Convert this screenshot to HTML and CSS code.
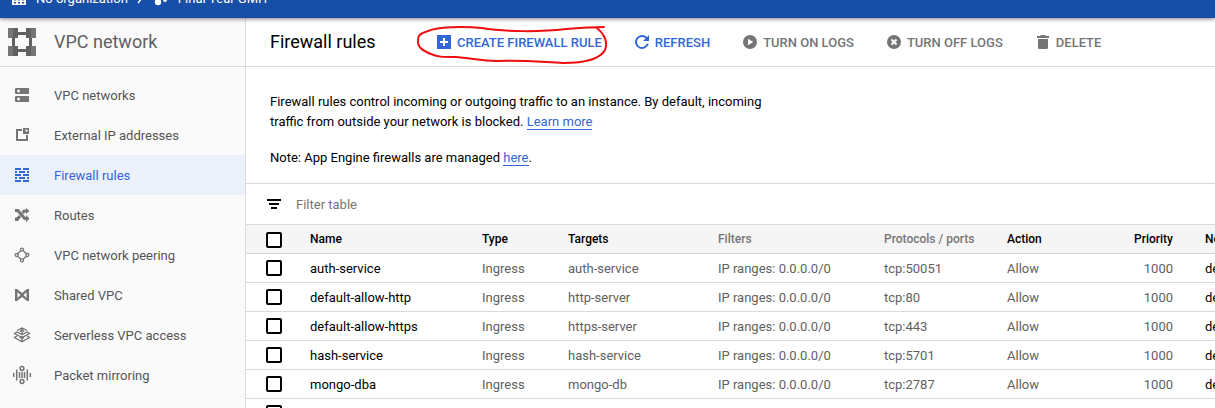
FILE: index.html
```html
<!DOCTYPE html>
<html lang="en">
<head>
<meta charset="utf-8">
<title>Firewall rules</title>
<link rel="stylesheet" href="styles.css">
</head>
<body>
<div class="app">
  <header class="topbar">
    <svg class="icon" viewBox="0 0 18 18"><path fill-rule="evenodd" d="M2 4h5V2h4v3h5v11H2zM4 7v1h2V7zm4 0v1h2V7zm4 0v1h2V7zM4 10v1.500h2V10zm4 0v1.500h2V10zm4 0v1.500h2V10zM4 13v1.500h2V13zm4 0v1.500h2V13zm4 0v1.500h2V13z"/></svg>
    <span class="crumb">No organization</span>
    <svg class="chevron" viewBox="0 0 8 12"><path d="M2 1l4 5-4 5" fill="none" stroke="currentColor" stroke-width="1.500"/></svg>
    <svg class="icon" viewBox="0 0 18 18"><circle cx="6" cy="13" r="3.200"/><circle cx="13" cy="11" r="2"/><circle cx="7" cy="5" r="2"/></svg>
    <span class="crumb">Final Year GMIT</span>
  </header>
  <div class="layout">
    <aside class="sidebar">
      <div class="product">
        <svg class="product-icon" viewBox="0 0 28 28"><path fill="#616161" d="M8 4h12v3H8zM8 21h12v3H8zM4 8h3v12H4zM21 8h3v12h-3z"/><path fill="#757575" d="M0 0h10v10H0zM18 0h10v10H18zM0 18h10v10H0zM18 18h10v10H18z"/><path fill="#616161" d="M5 0h5v10H5zM18 0h5v10h-5zM5 18h5v10H5zM18 18h5v10h-5z"/></svg>
        <span class="heading">VPC network</span>
      </div>
      <nav class="nav">
        <a class="nav-item" href="#"><svg class="icon" viewBox="0 0 18 18"><path fill-rule="evenodd" d="M3 2h13v6H3a1 1 0 0 1-1-1V3a1 1 0 0 1 1-1zM5.500 3.500a1.500 1.500 0 1 0 0 3 1.500 1.500 0 0 0 0-3zM3 10h13v6H3a1 1 0 0 1-1-1v-4a1 1 0 0 1 1-1zM5.500 11.500a1.500 1.500 0 1 0 0 3 1.500 1.500 0 0 0 0-3z"/></svg><span class="label">VPC networks</span></a>
        <a class="nav-item" href="#"><svg class="icon" viewBox="0 0 18 18"><path fill-rule="evenodd" d="M3 3h6v2H5v8h8V9h2v6H3zM10 2h6v6h-6zM12.500 3.500v2h2v-2z"/></svg><span class="label">External IP addresses</span></a>
        <a class="nav-item active" href="#" aria-current="page"><svg class="icon" viewBox="0 0 18 18"><path d="M2 2h6v2H2zM10 2h6v2h-6zM2 5h2v2H2zM6 5h6v2H6zM14 5h2v2h-2zM2 8h6v2H2zM10 8h6v2h-6zM2 11h2v2H2zM6 11h6v2H6zM14 11h2v2h-2zM2 14h6v2H2zM10 14h6v2h-6z"/></svg><span class="label">Firewall rules</span></a>
        <a class="nav-item" href="#"><svg class="icon" viewBox="0 0 18 18"><path d="M2 3h3.500l7 8h.500V9l3.500 3.500L13 16v-2h-2L4 6H2zM13 2l3.500 3L13 8V6.500h-1L10.500 8 8.500 6l2-2.500H13zM2 11.500h1.500L6 9l2 2-3 4H2z"/></svg><span class="label">Routes</span></a>
        <a class="nav-item" href="#"><svg class="icon" viewBox="0 0 18 18"><g fill="none" stroke="currentColor" stroke-width="1.300"><circle cx="9" cy="3.600" r="1.500"/><circle cx="9" cy="14.400" r="1.500"/><circle cx="3.600" cy="9" r="1.500"/><circle cx="14.400" cy="9" r="1.500"/><path d="M7.700 4.800L4.800 7.700M10.300 4.800l2.900 2.900M4.800 10.300l2.900 2.900M13.200 10.300l-2.900 2.900"/></g></svg><span class="label">VPC network peering</span></a>
        <a class="nav-item" href="#"><svg class="icon" viewBox="0 0 18 18"><path fill-rule="evenodd" d="M2 3h2l5 4 5-4h2v12h-2l-5-4-5 4H2zM4.500 6v6L7.500 9zM13.500 6v6l-3-3z"/></svg><span class="label">Shared VPC</span></a>
        <a class="nav-item" href="#"><svg class="icon" viewBox="0 0 18 18"><g fill="none" stroke="currentColor" stroke-width="1.300"><path d="M4 4.500L9 2l5 2.500M1.500 7.500L4 6l5 2.500L14 6l2.500 1.500L9 11.500zM9 4v4.500M4 10l-2.500 1.500L9 15.800l7.500-4.300L14 10M9 10.500v5M7 5.500l2-2 2 2M7 12.500l2-2 2 2"/></g></svg><span class="label">Serverless VPC access</span></a>
        <a class="nav-item" href="#"><svg class="icon" viewBox="0 0 18 18"><g fill="none" stroke="currentColor" stroke-width="1.500"><circle cx="9" cy="2.500" r="1.900"/><circle cx="9" cy="15.500" r="1.900"/><path d="M.7 7v4M3.700 3.500v11M6.500 6v6M9 6v6M11.500 6v6M14.300 3.500v11M17.300 7v4"/></g></svg><span class="label">Packet mirroring</span></a>
      </nav>
    </aside>
    <main class="main">
      <div class="toolbar">
        <h1 class="heading title">Firewall rules</h1>
        <div class="actions">
          <button class="action primary" type="button"><svg class="icon" viewBox="0 0 18 18"><path fill-rule="evenodd" d="M2 2h14v14H2zM8 5v3H5v2h3v3h2v-3h3V8h-3V5z"/></svg><span class="label">CREATE FIREWALL RULE</span></button>
          <button class="action primary" type="button"><svg class="icon" viewBox="0 0 18 18"><path d="M13.950 4.050A7 7 0 1 0 15.770 10.750H13.700A5 5 0 1 1 12.530 5.470L10 8h6V2z"/></svg><span class="label">REFRESH</span></button>
          <button class="action" type="button"><svg class="icon" viewBox="0 0 18 18"><path fill-rule="evenodd" d="M9 2a7 7 0 1 0 0 14A7 7 0 0 0 9 2zM7 5.800v6.400L12.200 9z"/></svg><span class="label">TURN ON LOGS</span></button>
          <button class="action" type="button"><svg class="icon" viewBox="0 0 18 18"><circle cx="9" cy="9" r="7"/><path d="M6.500 6.500l5 5M11.500 6.500l-5 5" stroke="#fff" stroke-width="2"/></svg><span class="label">TURN OFF LOGS</span></button>
          <button class="action" type="button"><svg class="icon" viewBox="0 0 18 18"><path d="M3 3h3l1-1h4l1 1h3v2H3zM4 6h10v8.500a1.500 1.500 0 0 1-1.500 1.500h-7A1.500 1.500 0 0 1 4 14.500z"/></svg><span class="label">DELETE</span></button>
        </div>
        <svg class="marker" viewBox="0 0 192 40"><path d="M188 3C172 3 162 4 150 5C125 8 90 8 66 4C45 2 22 3 12 7C3 10 2 11 2 18C2 24 8 27 15 30C22 33 26 33 39 33C55 34 65 37 80 37C110 36 125 38 147 39C168 39 184 35 189 26C192 18 188 10 181 4" fill="none" stroke="#f00d12" stroke-width="2" stroke-linecap="round"/></svg>
      </div>
      <section class="intro">
        <p>Firewall rules control incoming or outgoing traffic to an instance. By default, incoming traffic from outside your network is blocked. <a class="link" href="#">Learn more</a></p>
        <p>Note: App Engine firewalls are managed <a class="link" href="#">here</a>.</p>
      </section>
      <div class="filter">
        <svg class="icon" viewBox="0 0 18 18"><path d="M2 4h14v2H2zM4 8h10v2H4zM6 12h6v2H6z"/></svg>
        <input class="filter-input" type="text" placeholder="Filter table" aria-label="Filter table">
      </div>
      <div class="table-wrap">
        <table class="rules">
          <colgroup><col class="c-check"><col class="c-name"><col class="c-type"><col class="c-targets"><col class="c-filters"><col class="c-ports"><col class="c-action"><col class="c-priority"><col></colgroup>
          <thead>
            <tr><th class="select"><input class="check" type="checkbox" aria-label="Select all rules"></th><th>Name</th><th>Type</th><th>Targets</th><th class="muted">Filters</th><th class="muted">Protocols / ports</th><th>Action</th><th class="num">Priority</th><th class="net">Network</th></tr>
          </thead>
          <tbody>
            <tr><td class="select"><input class="check" type="checkbox" aria-label="Select auth-service"></td><td class="strong">auth-service</td><td>Ingress</td><td>auth-service</td><td>IP ranges: 0.0.0.0/0</td><td>tcp:50051</td><td>Allow</td><td class="num">1000</td><td class="net">default</td></tr>
            <tr><td class="select"><input class="check" type="checkbox" aria-label="Select default-allow-http"></td><td class="strong">default-allow-http</td><td>Ingress</td><td>http-server</td><td>IP ranges: 0.0.0.0/0</td><td>tcp:80</td><td>Allow</td><td class="num">1000</td><td class="net">default</td></tr>
            <tr><td class="select"><input class="check" type="checkbox" aria-label="Select default-allow-https"></td><td class="strong">default-allow-https</td><td>Ingress</td><td>https-server</td><td>IP ranges: 0.0.0.0/0</td><td>tcp:443</td><td>Allow</td><td class="num">1000</td><td class="net">default</td></tr>
            <tr><td class="select"><input class="check" type="checkbox" aria-label="Select hash-service"></td><td class="strong">hash-service</td><td>Ingress</td><td>hash-service</td><td>IP ranges: 0.0.0.0/0</td><td>tcp:5701</td><td>Allow</td><td class="num">1000</td><td class="net">default</td></tr>
            <tr><td class="select"><input class="check" type="checkbox" aria-label="Select mongo-dba"></td><td class="strong">mongo-dba</td><td>Ingress</td><td>mongo-db</td><td>IP ranges: 0.0.0.0/0</td><td>tcp:2787</td><td>Allow</td><td class="num">1000</td><td class="net">default</td></tr>
            <tr><td class="select"><input class="check" type="checkbox" aria-label="Select rule"></td><td></td><td></td><td></td><td></td><td></td><td></td><td></td><td></td></tr>
          </tbody>
        </table>
      </div>
    </main>
  </div>
</div>
</body>
</html>
```

FILE: styles.css
```css
* { box-sizing: border-box; }

body {
  margin: 0;
  font: 13px/20px Roboto, "Liberation Sans", sans-serif;
  color: #000;
  background: #fff;
}

.app {
  display: flex;
  flex-direction: column;
  height: 100vh;
  overflow: hidden;
}

.icon {
  flex: none;
  width: 18px;
  height: 18px;
  fill: currentColor;
}

/* Optical centring of text beside an icon */
.label,
.crumb { padding-top: 2px; }

/* The bar is scrolled partly out of view */
.topbar {
  position: relative;
  z-index: 1;
  flex: none;
  display: flex;
  align-items: center;
  gap: 8px;
  height: 40px;
  margin-top: -22px;
  padding: 0 10px;
  color: #fff;
  background: #174fa8;
  box-shadow: 0 1px 4px rgba(0, 0, 0, 0.5);
}

.chevron {
  width: 8px;
  height: 12px;
}

.layout {
  flex: 1;
  display: flex;
  min-height: 0;
}

.sidebar {
  flex: none;
  width: 246px;
  background: #fafafa;
  border-right: 1px solid #dadada;
}

.product,
.toolbar {
  display: flex;
  align-items: center;
  height: 49px;
  border-bottom: 1px solid #dadada;
}

.product {
  gap: 18px;
  padding-left: 8px;
  color: #616161;
}

.product-icon {
  width: 28px;
  height: 28px;
}

.heading {
  margin: 0;
  font-size: 18px;
  font-weight: 400;
  line-height: 24px;
}

.nav { padding-top: 8px; }

.nav-item {
  display: flex;
  align-items: center;
  gap: 23px;
  height: 40px;
  padding-left: 13px;
  color: #555;
  text-decoration: none;
}

.nav-item .icon {
  color: #757575;
  overflow: visible;
}

.nav-item.active { background: #ebf0fa; }

.nav-item.active,
.nav-item.active .icon { color: #3367d6; }

.main {
  flex: 1;
  min-width: 0;
  overflow: hidden;
}

.toolbar {
  position: relative;
  padding-left: 24px;
}

.title { width: 165px; }

.actions {
  display: flex;
  gap: 31px;
}

.action {
  display: flex;
  align-items: center;
  gap: 4px;
  padding: 0;
  border: 0;
  background: none;
  color: #757575;
  font: inherit;
  font-weight: 500;
  white-space: nowrap;
}

.action.primary { color: #3367d6; }

.marker {
  position: absolute;
  left: 170px;
  top: 6px;
  width: 192px;
  height: 40px;
  overflow: visible;
  pointer-events: none;
}

.intro {
  padding: 25px 24px 15px;
  border-bottom: 1px solid #dadada;
}

.intro p {
  max-width: 500px;
  margin: 0;
}

.intro p + p { margin-top: 16px; }

.link {
  color: #3367d6;
  text-decoration: none;
  border-bottom: 1px solid #3367d6;
}

.filter {
  display: flex;
  align-items: center;
  gap: 13px;
  height: 41px;
  padding-left: 19px;
  border-bottom: 1px solid #dadada;
}

.filter-input {
  flex: 1;
  padding: 2px 0 0;
  border: 0;
  outline: 0;
  background: none;
  font: inherit;
}

.filter-input::placeholder {
  color: #757575;
  opacity: 1;
}

.table-wrap { overflow: hidden; }

.rules {
  width: 100%;
  min-width: 1069px;
  table-layout: fixed;
  border-collapse: separate;
  border-spacing: 0;
}

.c-check { width: 64px; }
.c-name { width: 172px; }
.c-type { width: 86px; }
.c-targets { width: 150px; }
.c-filters { width: 166px; }
.c-ports { width: 123px; }
.c-action { width: 100px; }
.c-priority { width: 66px; }

.rules th,
.rules td {
  height: 29px;
  padding: 0;
  border-bottom: 1px solid #dadada;
  text-align: left;
  color: #616161;
  white-space: nowrap;
}

.rules th {
  font-size: 12px;
  font-weight: 500;
  color: #000;
  background: #f5f5f5;
}

.rules td,
.rules th.select { padding-top: 2px; }
.rules td.select { padding-top: 0; }

.rules th.muted { color: #757575; }
.rules td.strong,
.rules td.net { color: #000; }
.rules .num { text-align: right; }
.rules .net { padding-left: 32px; }

.check {
  appearance: none;
  display: block;
  width: 16px;
  height: 16px;
  margin: 0 0 0 20px;
  border: 2px solid #000;
  border-radius: 2px;
  background: #fff;
}

.check:checked { background: #3367d6; }
```
